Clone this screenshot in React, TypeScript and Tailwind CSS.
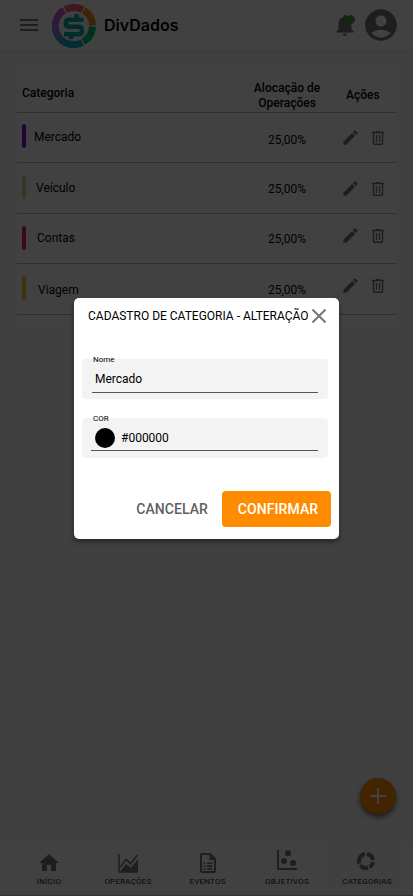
import React from "react";
import { MdHome, MdNotifications, MdAccountCircle, MdEdit } from "react-icons/md";

type Category = {
  name: string;
  row: string;
  bar: string;
  label: string;
  share: string;
  actions: string;
};

const categories: Category[] = [
  { name: "Mercado", row: "h-[50px]", bar: "bg-[#8a12c8] mt-[11px]", label: "ml-[8px] mt-[16px]", share: "mt-[19px]", actions: "mt-[15px]" },
  { name: "Veículo", row: "h-[51px]", bar: "bg-[#d5d58c] mt-[12px]", label: "ml-[10px] mt-[17px]", share: "mt-[18px]", actions: "mt-[16px]" },
  { name: "Contas", row: "h-[50px]", bar: "bg-[#e02766] mt-[12px]", label: "ml-[11px] mt-[16px]", share: "mt-[17px]", actions: "mt-[12px]" },
  { name: "Viagem", row: "h-[51px]", bar: "bg-[#e0cf20] mt-[12px]", label: "ml-[12px] mt-[18px]", share: "mt-[18px]", actions: "mt-[12px]" },
];

function Logo() {
  return (
    <svg width="44" height="44" viewBox="0 0 44 44" fill="none">
      <defs>
        <linearGradient id="leftArc" gradientUnits="userSpaceOnUse" x1="8" y1="4" x2="18" y2="42">
          <stop offset="0" stopColor="#e04bd0" />
          <stop offset=".5" stopColor="#9b72e0" />
          <stop offset="1" stopColor="#05b4c4" />
        </linearGradient>
        <linearGradient id="topArc" gradientUnits="userSpaceOnUse" x1="11" y1="0" x2="33" y2="0">
          <stop offset="0" stopColor="#f0609a" />
          <stop offset="1" stopColor="#f05a50" />
        </linearGradient>
      </defs>
      <circle cx="22" cy="22" r="21.500" fill="#f5f5f5" />
      <g strokeWidth="7">
        <path d="M12.200 6.300A18.500 18.500 0 0 0 30.400 38.500" stroke="url(#leftArc)" />
        <path d="M13.300 5.670A18.500 18.500 0 0 1 30.700 5.670" stroke="url(#topArc)" />
        <path d="M31.800 6.300A18.500 18.500 0 0 1 40.500 21.350" stroke="#ed8c18" />
        <path d="M40.500 22.650A18.500 18.500 0 0 1 31.500 37.860" stroke="#05b879" />
      </g>
      <path d="M31.500 15.700H17Q13.800 15.700 13.800 19.200T17 22.800H27Q30 22.800 30 26.500T27 30.200H12" stroke="#00a9a5" strokeWidth="4.400" />
      <path d="M24.500 10v5M19 30v5" stroke="#00a9a5" strokeWidth="4.500" />
    </svg>
  );
}

function Trash() {
  return (
    <svg width="12" height="14" viewBox="0 0 12 14" fill="none" stroke="#737373" strokeWidth="1.500">
      <path d="M0 1.500h12M4 .75h4M1.500 1.500v10.750q0 1 1 1h7q1 0 1-1V1.500" />
      <path d="M4.500 4v7M7.500 4v7" strokeWidth="1.200" />
    </svg>
  );
}

function AreaChart() {
  return (
    <svg width="20" height="19" viewBox="0 0 20 19" fill="none">
      <path d="M1 0v18h19" stroke="#757575" strokeWidth="1.500" />
      <path d="M2 18l6-8 5 3.500 7-8.500v13Z" fill="#757575" />
      <path d="M2.500 13l5.500-7.500 4.700 4.200L19.500 1" stroke="#757575" strokeWidth="1.700" />
    </svg>
  );
}

function Document() {
  return (
    <svg width="16" height="20" viewBox="0 0 16 20" fill="none">
      <path d="M2 1h8l5 5v11.500q0 1.500-1.500 1.500h-11Q1 19 1 17.500V2q0-1 1-1Z" stroke="#757575" strokeWidth="2" />
      <path d="M9.500 1v6H15Z" fill="#757575" />
      <path d="M3.500 10.300h2M7 10.300h5.500M3.500 13.100h2M7 13.100h5.500M3.500 15.900h2M7 15.900h5.500" stroke="#757575" strokeWidth="1.600" />
    </svg>
  );
}

function Scatter() {
  return (
    <svg width="20" height="20" viewBox="0 0 20 20">
      <path d="M1 0v19h19" fill="none" stroke="#757575" strokeWidth="2" />
      <g fill="#757575">
        <circle cx="11" cy="3.200" r="3" />
        <circle cx="7" cy="11" r="3" />
        <circle cx="16" cy="13" r="3" />
      </g>
    </svg>
  );
}

function Donut() {
  return (
    <svg width="18" height="18" viewBox="0 0 18 18" fill="none" stroke="#757575" strokeWidth="4">
      <path d="M10 2.070A7 7 0 0 1 15.930 8M15.930 10A7 7 0 0 1 12.500 15.060M11 15.710A7 7 0 0 1 3.300 13.100M2.500 11.600A7 7 0 0 1 8 2.070" />
    </svg>
  );
}

function NavItem({ label, className, children }: { label: string; className: string; children: React.ReactNode }) {
  return (
    <div className={`flex flex-col items-center ${className}`}>
      <div className="flex h-[24px] items-end">{children}</div>
      <span className="mt-[3px] whitespace-nowrap text-[8px] leading-[11px] tracking-[0.22px]">{label}</span>
    </div>
  );
}

export default function App() {
  return (
    <div className="relative h-[896px] w-[413px] overflow-hidden bg-[#f5f5f5] font-['Roboto',sans-serif] text-black">
      <div className="flex h-full flex-col">
        <header className="flex h-[50px] shrink-0 items-center bg-[#fcfcfc] pl-[20px] pr-[15px] shadow-[0_2px_4px_rgba(0,0,0,0.04)]">
          <div className="flex w-[18px] flex-col gap-[3px]">
            <i className="h-[2px] bg-[#757575]" />
            <i className="h-[2px] bg-[#757575]" />
            <i className="h-[2px] bg-[#757575]" />
          </div>
          <div className="ml-[14px] mt-[2px]"><Logo /></div>
          <span className="ml-[8px] font-['Inter',sans-serif] text-[16px] font-semibold leading-[20px]">DivDados</span>
          <div className="relative ml-auto mr-[2px] h-[22px] w-[24px]">
            <MdNotifications className="-mt-[2px] max-w-none" size={26} color="#757575" />
            <i className="absolute right-[1px] top-[1px] h-[9px] w-[9px] rounded-full bg-[#43a047]" />
          </div>
          <MdAccountCircle className="-mr-[2px] ml-[4px]" size={38} color="#757575" />
        </header>

        <main className="ml-[17px] mt-[16px] h-[263px] w-[379px] bg-[#fcfcfc] text-[12px] leading-[16px]">
          <div className="flex h-[47px] items-start border-b border-[#b5b5b5] font-medium">
            <span className="ml-[5px] mt-[19px] w-[230px]">Categoria</span>
            <span className="mt-[15px] w-[70px] text-center leading-[15px]">Alocação de Operações</span>
            <span className="ml-[24px] mt-[21px]">Ações</span>
          </div>
          {categories.map((c) => (
            <div key={c.name} className={`flex items-start border-b border-[#b5b5b5] ${c.row}`}>
              <i className={`ml-[5px] h-[24px] w-[4px] shrink-0 rounded-full ${c.bar}`} />
              <span className={`grow ${c.label}`}>{c.name}</span>
              <span className={`mr-[34px] w-[42px] text-center ${c.share}`}>25,00%</span>
              <div className={`mr-[12px] flex w-[42px] items-center justify-between ${c.actions}`}>
                <MdEdit className="-ml-[1px]" size={19} color="#737373" />
                <Trash />
              </div>
            </div>
          ))}
        </main>

        <button className="mb-[31px] mr-[17px] mt-auto flex h-[36px] w-[36px] shrink-0 items-center justify-center self-end rounded-full bg-[#ff8c00] shadow-[0_3px_5px_rgba(0,0,0,0.6)]">
          <svg width="16" height="16" stroke="white" strokeWidth="2"><path d="M0 8h16M8 0v16" /></svg>
        </button>

        <nav className="flex h-[51px] shrink-0 border-b border-[#c8c8c8] bg-[#fcfcfc] pl-[10px] text-[#222]">
          <NavItem label="INÍCIO" className="w-[78px] pt-[4px]"><MdHome className="-mb-[2px]" size={24} color="#757575" /></NavItem>
          <NavItem label="OPERAÇÕES" className="w-[80px] pt-[4px]"><AreaChart /></NavItem>
          <NavItem label="EVENTOS" className="w-[79px] pt-[4px]"><Document /></NavItem>
          <NavItem label="OBJETIVOS" className="w-[80px] pt-[4px]"><div className="mb-[3px]"><Scatter /></div></NavItem>
          <NavItem label="CATEGORIAS" className="w-[74px] bg-[#f5f5f5] pl-[6px] pt-[4px]"><div className="mb-[3px] mr-[3px]"><Donut /></div></NavItem>
        </nav>
      </div>

      <div className="absolute inset-0 bg-black/74">
        <section className="ml-[74px] mt-[298px] flex h-[241px] w-[265px] flex-col rounded-[5px] bg-white shadow-[0_3px_5px_rgba(0,0,0,0.4)]">
          <div className="flex h-[36px] items-center pl-[14px]">
            <h1 className="w-[223px] whitespace-nowrap text-[12px] leading-[16px]">CADASTRO DE CATEGORIA - ALTERAÇÃO</h1>
            <svg width="16" height="16" stroke="#757575" strokeWidth="2"><path d="M1.500 1.500l13 13M14.500 1.500l-13 13" /></svg>
          </div>
          <div className="ml-[8px] mt-[25px] h-[40px] w-[246px] rounded-[4px] bg-[#f3f3f3]">
            <div className="-mt-[4px] ml-[11px] text-[8px] leading-[9px]">Nome</div>
            <div className="ml-[10px] mr-[10px] mt-[7px] h-[22px] border-b border-[#555] pl-[3px] text-[12px] leading-[16px]">Mercado</div>
          </div>
          <div className="ml-[8px] mt-[19px] h-[40px] w-[246px] rounded-[4px] bg-[#f3f3f3]">
            <div className="-mt-[4px] ml-[11px] text-[8px] leading-[9px]">COR</div>
            <div className="ml-[9px] mr-[10px] mt-[5px] flex h-[23px] items-start border-b border-[#555] pl-[4px] text-[12px] leading-[20px]">
              <i className="mr-[6px] h-[20px] w-[20px] rounded-full bg-black" />
              #000000
            </div>
          </div>
          <div className="mb-[12px] mr-[8px] mt-auto flex items-center justify-end text-[14px] font-medium tracking-[0.08px]">
            <button className="mr-[14px] text-[#616161]">CANCELAR</button>
            <button className="h-[36px] w-[109px] rounded-[4px] bg-[#ff8c00] pl-[3px] text-white">CONFIRMAR</button>
          </div>
        </section>
      </div>
    </div>
  );
}
